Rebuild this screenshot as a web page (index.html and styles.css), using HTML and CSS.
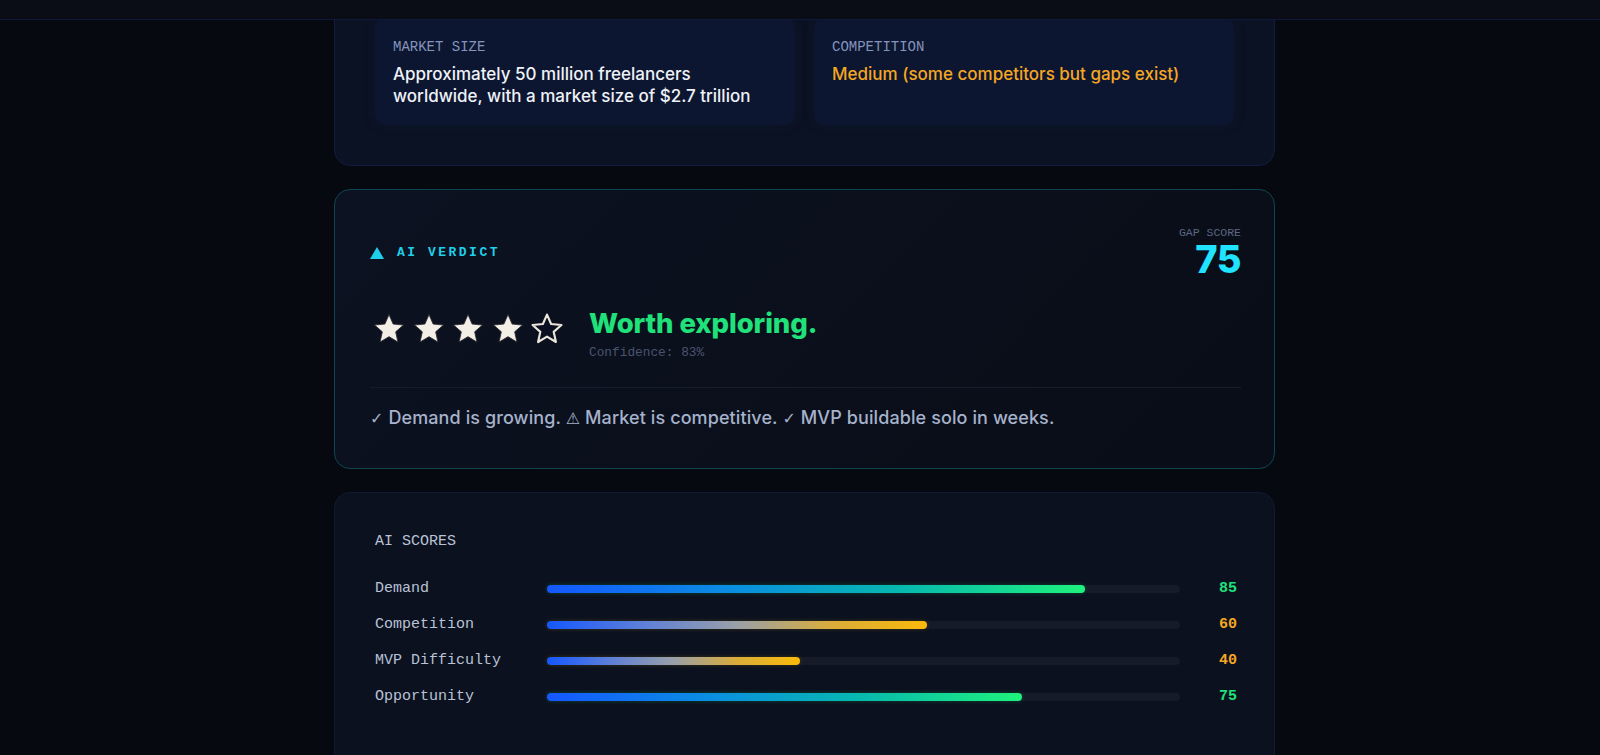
FILE: index.html
```html
<!DOCTYPE html>
<html lang="en">
<head>
<meta charset="utf-8">
<title>Idea Report</title>
<link rel="stylesheet" href="styles.css">
</head>
<body>
<header class="topbar"></header>
<main class="page">
  <section class="card card-market">
    <div class="facts">
      <div class="fact">
        <div class="fact-label">MARKET SIZE</div>
        <div class="fact-value">Approximately 50 million freelancers<br>worldwide, with a market size of $2.7 trillion</div>
      </div>
      <div class="fact">
        <div class="fact-label">COMPETITION</div>
        <div class="fact-value amber">Medium (some competitors but gaps exist)</div>
      </div>
    </div>
  </section>

  <section class="card verdict">
    <div class="verdict-head">
      <div class="verdict-title">
        <svg class="tri" viewBox="0 0 14 12" width="14" height="12"><polygon points="7,0 14,12 0,12" fill="#1fd0ea"/></svg>
        <span>AI VERDICT</span>
      </div>
      <div class="gap">
        <div class="gap-label">GAP SCORE</div>
        <div class="gap-value">75</div>
      </div>
    </div>
    <div class="verdict-body">
      <div class="stars">
        <svg class="star" viewBox="0 0 24 24"><polygon points="12,1.8 14.9,8.5 22.2,9.2 16.7,14 18.3,21.2 12,17.4 5.7,21.2 7.3,14 1.8,9.2 9.1,8.5" class="fill"/></svg>
        <svg class="star" viewBox="0 0 24 24"><polygon points="12,1.8 14.9,8.5 22.2,9.2 16.7,14 18.3,21.2 12,17.4 5.7,21.2 7.3,14 1.8,9.2 9.1,8.5" class="fill"/></svg>
        <svg class="star" viewBox="0 0 24 24"><polygon points="12,1.8 14.9,8.5 22.2,9.2 16.7,14 18.3,21.2 12,17.4 5.7,21.2 7.3,14 1.8,9.2 9.1,8.5" class="fill"/></svg>
        <svg class="star" viewBox="0 0 24 24"><polygon points="12,1.8 14.9,8.5 22.2,9.2 16.7,14 18.3,21.2 12,17.4 5.7,21.2 7.3,14 1.8,9.2 9.1,8.5" class="fill"/></svg>
        <svg class="star" viewBox="0 0 24 24"><polygon points="12,1.8 14.9,8.5 22.2,9.2 16.7,14 18.3,21.2 12,17.4 5.7,21.2 7.3,14 1.8,9.2 9.1,8.5" class="empty"/></svg>
      </div>
      <div class="verdict-text">
        <div class="verdict-main">Worth exploring.</div>
        <div class="confidence">Confidence: 83%</div>
      </div>
    </div>
    <div class="divider"></div>
    <p class="reasons"><span class="sym">✓</span> Demand is growing. <span class="sym">⚠&#xFE0E;</span> Market is competitive. <span class="sym">✓</span> MVP buildable solo in weeks.</p>
  </section>

  <section class="card scores">
    <div class="scores-title">AI SCORES</div>
    <div class="rows">
      <div class="row">
        <span class="row-label">Demand</span>
        <div class="track"><div class="fill-bar green" style="width:85%"></div></div>
        <span class="row-num green-t">85</span>
      </div>
      <div class="row">
        <span class="row-label">Competition</span>
        <div class="track"><div class="fill-bar amber-b" style="width:60%"></div></div>
        <span class="row-num amber-t">60</span>
      </div>
      <div class="row">
        <span class="row-label">MVP Difficulty</span>
        <div class="track"><div class="fill-bar amber-b" style="width:40%"></div></div>
        <span class="row-num amber-t">40</span>
      </div>
      <div class="row">
        <span class="row-label">Opportunity</span>
        <div class="track"><div class="fill-bar green" style="width:75%"></div></div>
        <span class="row-num green-t">75</span>
      </div>
    </div>
  </section>
</main>
</body>
</html>
```

FILE: styles.css
```css
* { box-sizing: border-box; }

html, body {
  margin: 0;
  padding: 0;
  background: #060910;
  height: 100%;
  overflow: hidden;
}

body {
  font-family: "Inter", "Liberation Sans", sans-serif;
  color: #eef1f6;
}

.topbar {
  position: fixed;
  top: 0;
  left: 0;
  right: 0;
  height: 20px;
  background: #0a0d16;
  border-bottom: 1px solid #0f1838;
  z-index: 10;
}

.page {
  width: 941px;
  margin: -23px 0 0 calc(50% - 466px);
  display: flex;
  flex-direction: column;
  gap: 23px;
}

.card {
  border-radius: 16px;
  border: 1px solid #121d3d;
  background: #0b1223;
  padding: 40px;
}

/* market card */
.facts {
  display: grid;
  grid-template-columns: 1fr 1fr;
  gap: 19px;
}

.fact {
  background: #0d1630;
  border-radius: 10px;
  padding: 21px 10px 18px 18px;
  box-shadow: 0 0 12px rgba(20, 34, 70, 0.25);
}

.fact-label {
  font-family: "Liberation Mono", "DejaVu Sans Mono", monospace;
  font-size: 14px;
  line-height: 16px;
  color: #8494bd;
  margin-bottom: 8px;
}

.fact-value {
  font-size: 17px;
  line-height: 22px;
  font-weight: 500;
  color: #eef2f8;
  white-space: nowrap;
}

.fact-value.amber { color: #f5a623; }

/* verdict card */
.verdict {
  border-color: #0e4550;
  background: linear-gradient(135deg, #0c1221 0%, #0a0f1b 55%, #090d17 100%);
  padding: 36px 33px 38px 35px;
}

.verdict-head {
  display: flex;
  justify-content: space-between;
  align-items: center;
}

.verdict-title {
  display: flex;
  align-items: center;
  gap: 13px;
  font-family: "Liberation Mono", "DejaVu Sans Mono", monospace;
  font-size: 13px;
  font-weight: 700;
  letter-spacing: 2.5px;
  color: #1fd0ea;
}

.tri { display: block; }

.gap {
  text-align: right;
}

.gap-label {
  font-family: "Liberation Mono", "DejaVu Sans Mono", monospace;
  font-size: 11.5px;
  line-height: 13px;
  color: #5d6783;
}

.gap-value {
  font-size: 38px;
  line-height: 40px;
  font-weight: 800;
  color: #1fe3ff;
  letter-spacing: -0.5px;
}

.verdict-body {
  display: flex;
  align-items: flex-start;
  gap: 25px;
  margin-top: 28px;
  padding-left: 2px;
}

.stars {
  display: flex;
  gap: 5.5px;
  padding-top: 5px;
}

.star {
  width: 34px;
  height: 34px;
  display: block;
}

.star .fill {
  fill: #f3efe6;
  stroke: #2a2a30;
  stroke-width: 0.6;
  stroke-linejoin: round;
}

.star .empty {
  fill: #0b1020;
  stroke: #ece7dc;
  stroke-width: 1.5;
  stroke-linejoin: round;
}

.verdict-main {
  font-size: 27.5px;
  line-height: 32px;
  font-weight: 800;
  color: #1fe27a;
  letter-spacing: -0.1px;
}

.confidence {
  margin-top: 6px;
  font-family: "Liberation Mono", "DejaVu Sans Mono", monospace;
  font-size: 12.8px;
  line-height: 16px;
  color: #4a5470;
}

.divider {
  margin-top: 26px;
  height: 1px;
  background: #151c2c;
}

.reasons {
  margin: 0;
  padding-top: 19px;
  font-size: 18px;
  font-weight: 500;
  letter-spacing: 0.1px;
  line-height: 22px;
  color: #a6b2cb;
}

.reasons .sym {
  font-family: "DejaVu Sans", sans-serif;
  font-size: 16px;
  font-weight: 400;
}

/* scores card */
.scores {
  background: #0b111f;
  border-color: #111a30;
  padding: 40px 37px 80px 40px;
}

.scores-title {
  font-family: "Liberation Mono", "DejaVu Sans Mono", monospace;
  font-size: 15px;
  line-height: 18px;
  color: #b9c2d6;
}

.rows {
  margin-top: 28px;
  display: flex;
  flex-direction: column;
  gap: 16px;
}

.row {
  display: grid;
  grid-template-columns: 172px 1fr 57px;
  align-items: center;
  height: 20px;
}

.row-label {
  font-family: "Liberation Mono", "DejaVu Sans Mono", monospace;
  font-size: 15px;
  line-height: 20px;
  color: #b9c2d6;
}

.track {
  height: 8px;
  border-radius: 4px;
  background: #151b29;
}

.fill-bar {
  height: 100%;
  border-radius: 4px;
}

.fill-bar.green {
  background: linear-gradient(90deg, #1557ff 0%, #0a8fe0 35%, #07b7b0 65%, #1ef27c 100%);
  box-shadow: 0 0 4px rgba(30, 240, 124, 0.25);
}

.fill-bar.amber-b {
  background: linear-gradient(90deg, #1557ff 0%, #5d7fd8 25%, #9aa0a8 50%, #d9ad3a 75%, #fbb90a 100%);
  box-shadow: 0 0 4px rgba(251, 185, 10, 0.2);
}

.row-num {
  text-align: right;
  font-family: "Liberation Mono", "DejaVu Sans Mono", monospace;
  font-size: 15px;
  font-weight: 700;
  line-height: 20px;
}

.green-t { color: #1fe27a; }
.amber-t { color: #f5a623; }
```
